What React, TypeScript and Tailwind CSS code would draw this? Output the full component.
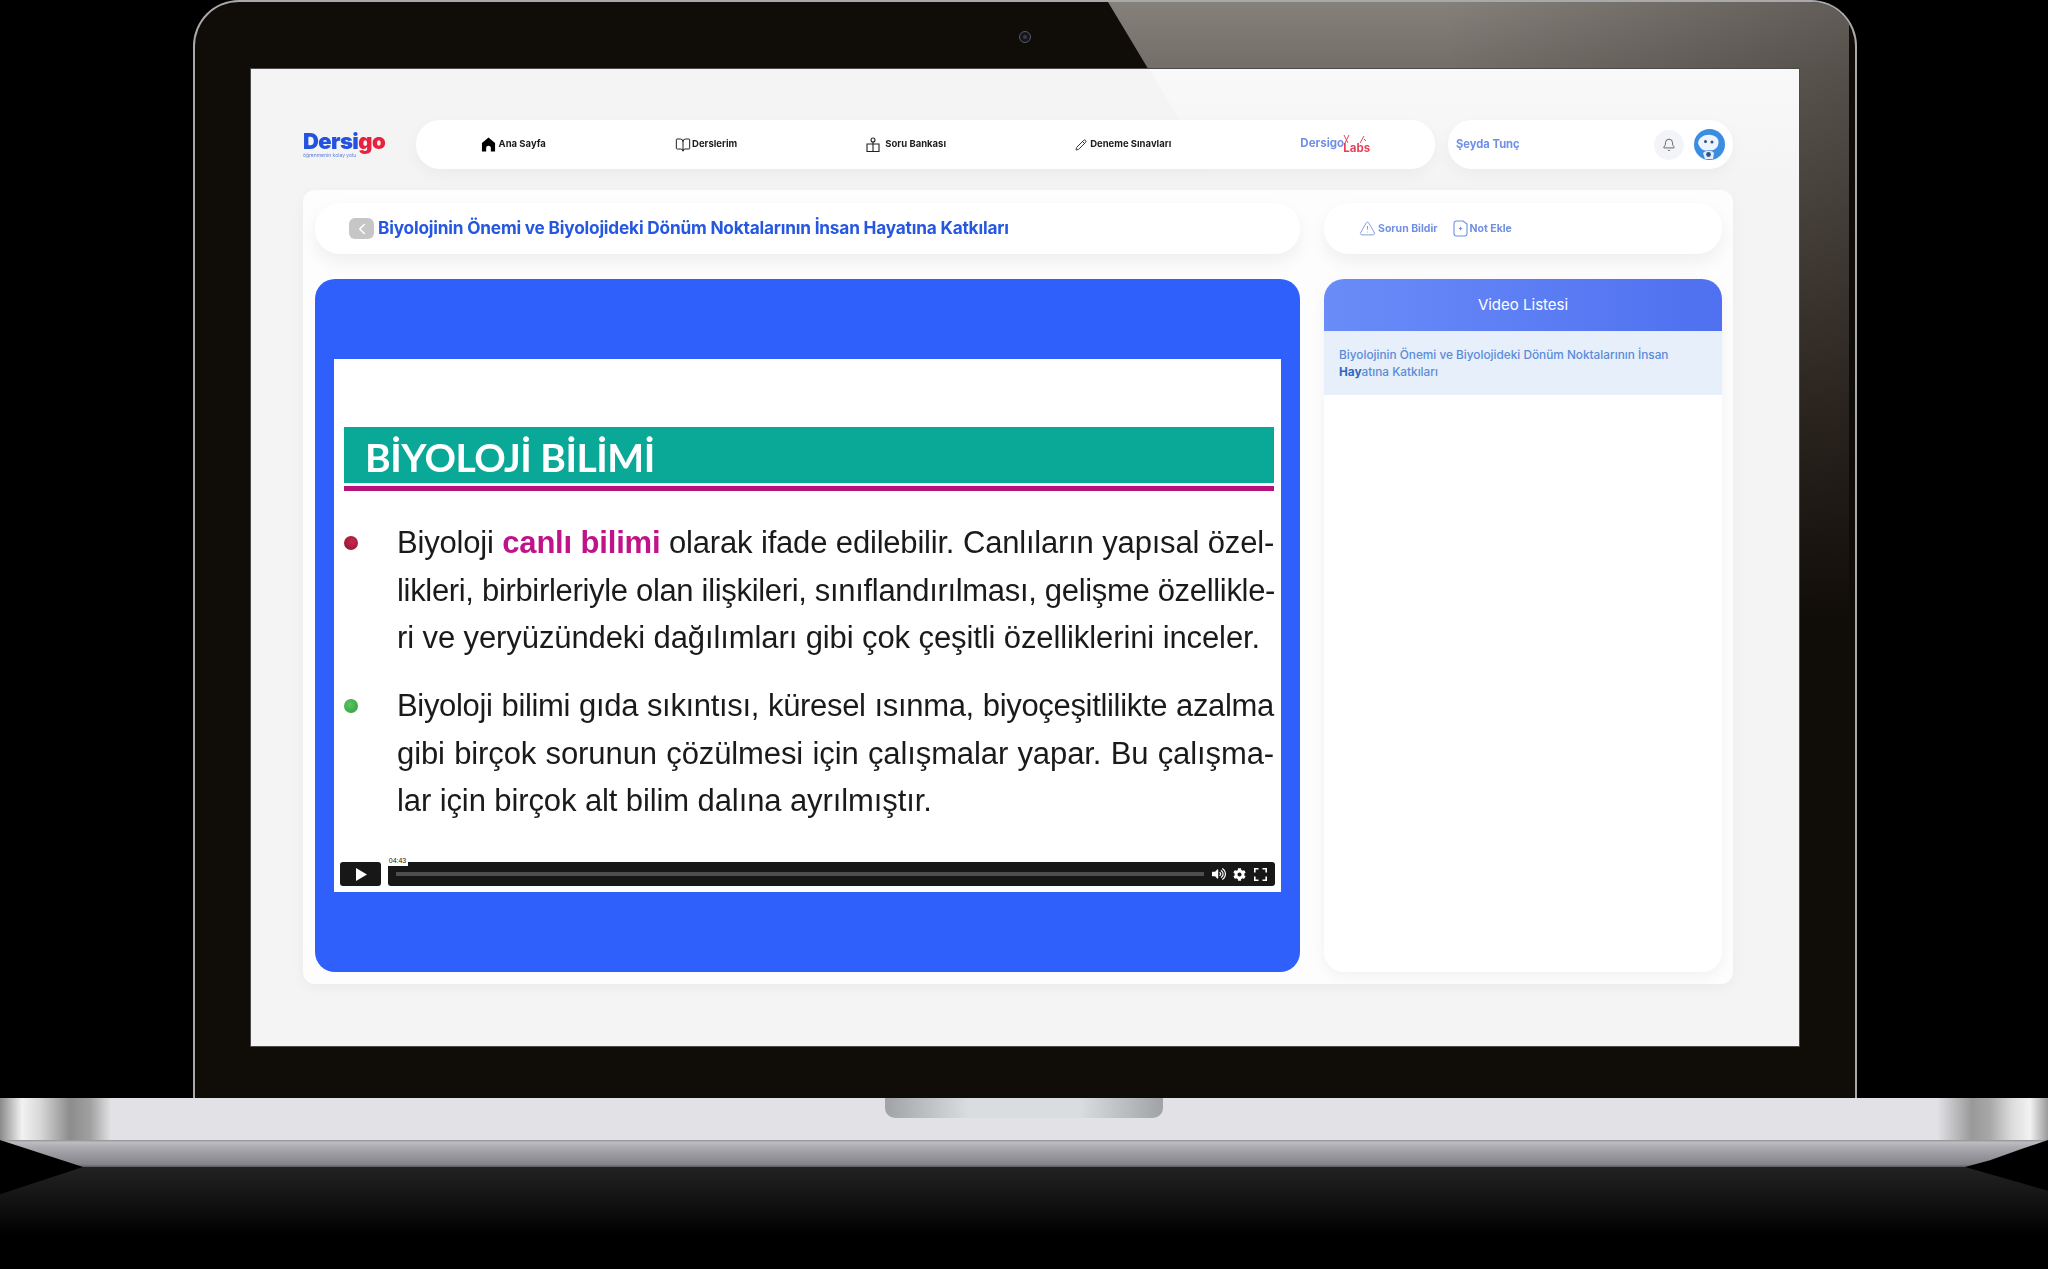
import { BookOpen, Bell, ChevronLeft, Pencil, TriangleAlert } from 'lucide-react'
import { FaCog, FaVolumeUp } from 'react-icons/fa'

const HomeIcon = () => (
  <svg width="15" height="17" viewBox="0 0 16 17" fill="#000">
    <path d="M8 1 L15 7 V16 H10.5 V12 C10.5 9 5.5 9 5.5 12 V16 H1 V7 Z" />
  </svg>
)

const BankIcon = () => (
  <svg width="14" height="16" viewBox="0 0 14 16" fill="none" stroke="#222" strokeWidth="1.1">
    <circle cx="7" cy="3" r="2" />
    <path d="M1 7 H13 V14.5 H1 Z M7 5 V14.5" />
  </svg>
)

const NoteIcon = () => (
  <svg width="15" height="17" viewBox="0 0 15 17" fill="none" stroke="#6f8fe0" strokeWidth="1.1">
    <path d="M3.5 1 H10 L14 4 V13.5 A2.5 2.5 0 0 1 11.5 16 H3.5 A2.5 2.5 0 0 1 1 13.5 V3.5 A2.5 2.5 0 0 1 3.5 1 Z" />
    <path d="M7.5 6.8 V10.2 M5.8 8.5 H9.2" />
  </svg>
)

const Avatar = () => (
  <svg width="31" height="31" viewBox="0 0 31 31">
    <circle cx="15.5" cy="15.5" r="15.5" fill="#3b8de0" />
    <path d="M4 14 C5 8 11 5 17 6 C23 7 26 11 24 16 C23 20 19 22 15 21 C10 23 6 20 4 14 Z" fill="#eef4fb" />
    <circle cx="11.5" cy="12.5" r="1.5" fill="#33507f" />
    <circle cx="18" cy="13" r="1.5" fill="#33507f" />
    <path d="M9 24 C12 21 18 21 20 24 L19 30 L11 30 Z" fill="#e6edf6" />
    <circle cx="14.5" cy="25.5" r="2.4" fill="#34508c" />
  </svg>
)

const navItems = [
  { label: 'Ana Sayfa', icon: <HomeIcon />, gap: 'gap-[3px]' },
  { label: 'Derslerim', icon: <BookOpen size={16} strokeWidth={1.5} color="#222" />, gap: 'gap-[1px]' },
  { label: 'Soru Bankası', icon: <BankIcon />, gap: 'gap-[5px]' },
  { label: 'Deneme Sınavları', icon: <Pencil size={12} strokeWidth={1.8} color="#222" />, gap: 'gap-[3px]' },
]

const Nav = () => (
  <div className="flex items-center h-[49px]">
    <div className="w-[113px] shrink-0">
      <div className="text-[22px] leading-[21px] font-black tracking-[-0.6px] text-[#2452e0]">
        Dersi<span className="text-[#e9213d]">go</span>
      </div>
      <div className="text-[5px] leading-[6px] text-[#5b7be0]">öğrenmenin kolay yolu</div>
    </div>
    <nav className="w-[1019px] h-[49px] shrink-0 bg-white rounded-[24px] flex justify-around items-center shadow-[0_6px_16px_rgba(0,0,0,0.04)]">
      {navItems.map((item) => (
        <a key={item.label} className={`flex items-center ${item.gap} text-[9.5px] font-bold text-[#1c1c1c]`}>
          {item.icon}
          {item.label}
        </a>
      ))}
      <a className="flex items-start w-[70px] relative h-5">
        <span className="text-[11.5px] leading-[16px] font-bold text-[#6f8fe8]">Dersigo</span>
        <span className="absolute left-[43px] top-[8px] text-[11.5px] leading-[11px] font-bold text-[#e9405a]">Labs</span>
        <svg className="absolute left-[43px] top-0" width="24" height="9" viewBox="0 0 24 9" fill="none" stroke="#e9405a" strokeWidth="1">
          <path d="M1 0 L5 8 M6 0 L2 8 M17 8 L21 1 M21 4 L23 6" />
        </svg>
      </a>
    </nav>
    <div className="w-[285px] h-[49px] shrink-0 ml-[13px] bg-white rounded-[24px] flex items-center pl-2 pr-2 shadow-[0_6px_16px_rgba(0,0,0,0.04)]">
      <span className="text-[11.2px] font-bold text-[#6f8fe8]">Şeyda Tunç</span>
      <span className="ml-auto w-[30px] h-[30px] rounded-full bg-[#f3f4f8] flex items-center justify-center">
        <Bell size={14} strokeWidth={1.5} color="#555" />
      </span>
      <span className="ml-[10px]">
        <Avatar />
      </span>
    </div>
  </div>
)

const Bullet = ({ color }: { color: string }) => (
  <span className={`w-[14px] h-[14px] rounded-full mt-[17px] shrink-0 ${color}`} />
)

const Slide = () => (
  <div className="h-[533px] bg-white px-[6px] pb-[6px] pt-[68px] flex flex-col">
    <div className="ml-[4px] w-[930px] h-[56px] bg-[#0aa896] flex items-center pl-[21px] pt-[4px]">
      <span className="text-[39px] font-bold tracking-[-0.5px] text-white font-['Lato','Inter',sans-serif]">BİYOLOJİ BİLİMİ</span>
    </div>
    <div className="ml-[4px] w-[930px] h-[5px] mt-[3px] bg-[#b5127c]" />
    <div className="ml-[4px] mt-[28px] w-[930px] text-[31px] leading-[47.5px] tracking-[-0.1px] text-[#1a1a1a] font-['Liberation_Sans',Arial,sans-serif]">
      <div className="flex">
        <Bullet color="bg-[radial-gradient(circle_at_60%_40%,#c8264a,#8d1530)]" />
        <div className="ml-[39px] w-[877px]">
          <div className="[text-align-last:justify] whitespace-nowrap tracking-[-0.2px]">
            Biyoloji <b className="text-[#c0128a]">canlı bilimi</b> olarak ifade edilebilir. Canlıların yapısal özel-
          </div>
          <div className="[text-align-last:justify] whitespace-nowrap tracking-[-0.32px]">
            likleri, birbirleriyle olan ilişkileri, sınıflandırılması, gelişme özellikle-
          </div>
          <div className="whitespace-nowrap">ri ve yeryüzündeki dağılımları gibi çok çeşitli özelliklerini inceler.</div>
        </div>
      </div>
      <div className="flex mt-[20.5px]">
        <Bullet color="bg-[radial-gradient(circle_at_40%_40%,#5cc45e,#2e9c42)]" />
        <div className="ml-[39px] w-[877px]">
          <div className="[text-align-last:justify] whitespace-nowrap tracking-[-0.32px]">
            Biyoloji bilimi gıda sıkıntısı, küresel ısınma, biyoçeşitlilikte azalma
          </div>
          <div className="[text-align-last:justify] whitespace-nowrap">
            gibi birçok sorunun çözülmesi için çalışmalar yapar. Bu çalışma-
          </div>
          <div className="whitespace-nowrap">lar için birçok alt bilim dalına ayrılmıştır.</div>
        </div>
      </div>
    </div>
    <div className="mt-auto flex gap-[7px] h-6">
      <button className="w-[41px] bg-[#171717] rounded-[3px] flex items-center justify-center">
        <svg width="12" height="13" viewBox="0 0 12 13" fill="#fff">
          <path d="M1 0 L12 6.5 L1 13 Z" />
        </svg>
      </button>
      <div className="flex-1 bg-[#171717] rounded-[3px] relative flex items-center pl-2 pr-[8px]">
        <span className="absolute -top-[7px] -left-px w-[21px] h-[11px] bg-white text-[7px] leading-[11px] text-center text-[#222] font-['Liberation_Sans',sans-serif]">
          04:43
        </span>
        <div className="w-[808px] h-1 bg-[#4e4e4e] mt-[-1px]" />
        <FaVolumeUp className="ml-auto text-white" size={14} />
        <FaCog className="ml-[7px] text-white" size={13} />
        <svg className="ml-[8px]" width="13" height="13" viewBox="0 0 13 13" fill="#fff">
          <path d="M0 0 H4.5 V1.6 H1.6 V4.5 H0 Z M8.5 0 H13 V4.5 H11.4 V1.6 H8.5 Z M0 8.5 H1.6 V11.4 H4.5 V13 H0 Z M11.4 8.5 H13 V13 H8.5 V11.4 H11.4 Z" />
        </svg>
      </div>
    </div>
  </div>
)

const Card = () => (
  <div className="mt-[21px] h-[794px] w-[1430px] bg-[#fdfdfd] rounded-[12px] pt-[13px] pl-[12px] pr-[11px] shadow-[0_4px_14px_rgba(0,0,0,0.04)]">
    <div className="flex gap-6 h-[51px]">
      <div className="w-[985px] bg-white rounded-[25px] flex items-center pl-[34px] gap-[4px] shadow-[0_8px_18px_rgba(0,0,0,0.06)]">
        <span className="w-[25px] h-[21px] bg-[#c6c6c6] rounded-[6px] flex items-center justify-center">
          <ChevronLeft size={18} strokeWidth={2} color="#fff" />
        </span>
        <h1 className="text-[17.25px] font-bold tracking-[-0.2px] text-[#2557e0] -mt-px">
          Biyolojinin Önemi ve Biyolojideki Dönüm Noktalarının İnsan Hayatına Katkıları
        </h1>
      </div>
      <div className="w-[398px] bg-white rounded-[25px] flex items-center pl-[35px] text-[10.5px] font-bold text-[#6f8fe0] shadow-[0_8px_18px_rgba(0,0,0,0.06)]">
        <TriangleAlert size={17} strokeWidth={1.2} color="#6f8fe0" />
        <span className="ml-[2px]">Sorun Bildir</span>
        <span className="ml-[15px]">
          <NoteIcon />
        </span>
        <span className="ml-[2px]">Not Ekle</span>
      </div>
    </div>
    <div className="flex gap-6 mt-[25px] h-[693px]">
      <div className="w-[985px] bg-[#3060fc] rounded-[20px] pt-[80px] px-[19px]">
        <Slide />
      </div>
      <div className="w-[398px] bg-white rounded-[20px] overflow-hidden shadow-[0_4px_14px_rgba(0,0,0,0.05)]">
        <div className="h-[52px] bg-[linear-gradient(to_right,#6a8cf8,#4f70f0)] flex items-center justify-center text-[15px] text-white font-normal">
          Video Listesi
        </div>
        <div className="h-[64px] bg-[#e6effa] pl-[15px] pr-8 pt-[16px] text-[11.8px] leading-[17px] font-medium text-[#5b8bd8]">
          Biyolojinin Önemi ve Biyolojideki Dönüm Noktalarının İnsan <span className="font-bold text-[#2f66c4]">Hay</span>atına Katkıları
        </div>
      </div>
    </div>
  </div>
)

export default function App() {
  return (
    <div className="w-[2048px] h-[1269px] bg-black overflow-hidden font-['Inter',sans-serif]">
      <div className="relative ml-[193px] w-[1664px] h-[1098px] rounded-t-[46px] border-x-2 border-t-2 border-[#a9a9a9] bg-[#100c08] pt-[67px] pl-[56px] overflow-hidden">
        <div className="absolute inset-y-0 left-0 right-[6px] bg-[linear-gradient(to_right,transparent_1250px,rgba(16,12,8,0.3)_100%),linear-gradient(to_bottom,#85807a_0,#726d66_70px,#5a554d_200px,#362f28_400px,#100c08_620px)] [clip-path:polygon(913px_0,100%_0,100%_100%,1571px_100%)]" />
        <div className="absolute left-[824px] top-[29px] w-[12px] h-[12px] rounded-full border border-[#5a5a68] bg-[#15151c] flex items-center justify-center">
          <span className="w-1 h-1 rounded-full bg-[#3a3a4a]" />
        </div>
        <div className="relative w-[1548px] h-[977px] bg-[#f4f4f5] pt-[51px] pl-[52px] shadow-[0_0_0_1px_#4a4a4a] blur-[0.5px]">
          <div className="absolute top-0 right-0 left-[898px] h-[121px] bg-[linear-gradient(to_bottom,rgba(255,255,255,0.45),rgba(255,255,255,0))] [clip-path:polygon(0_0,100%_0,100%_100%,73px_100%)]" />
          <div className="relative">
            <Nav />
            <Card />
          </div>
        </div>
      </div>
      <div className="h-[42px] bg-[linear-gradient(to_right,#8a8a8a_0,#f2f2f2_22px,#d8d8d8_40px,#8c8c8c_70px,#a0a0a0_90px,#e2e2e6_111px,#e2e2e6_1937px,#999_1972px,#a8a8a8_1990px,#dcdcdc_2012px,#f2f2f2_2030px,#9a9a9a_2048px)]">
        <div className="ml-[885px] w-[278px] h-5 rounded-b-[10px] bg-[linear-gradient(to_right,#9fa3a5,#dadde0_30%,#dadde0_70%,#9fa3a5)]" />
      </div>
      <div className="h-[27px] bg-[linear-gradient(to_bottom,#9c9ca0_0,#9c9ca0_1px,#bdbdc2_2px,#a8a8ae_30%,#84848a_90%,#5c5c60)] [clip-path:polygon(0_0,100%_0,2020px_35%,1990px_75%,1965px_100%,83px_100%)]" />
      <div className="h-[68px] bg-[linear-gradient(to_bottom,#222,#141414_45%,#000)] [clip-path:polygon(83px_0,1965px_0,100%_35%,100%_100%,0_100%,0_40%)]" />
    </div>
  )
}
